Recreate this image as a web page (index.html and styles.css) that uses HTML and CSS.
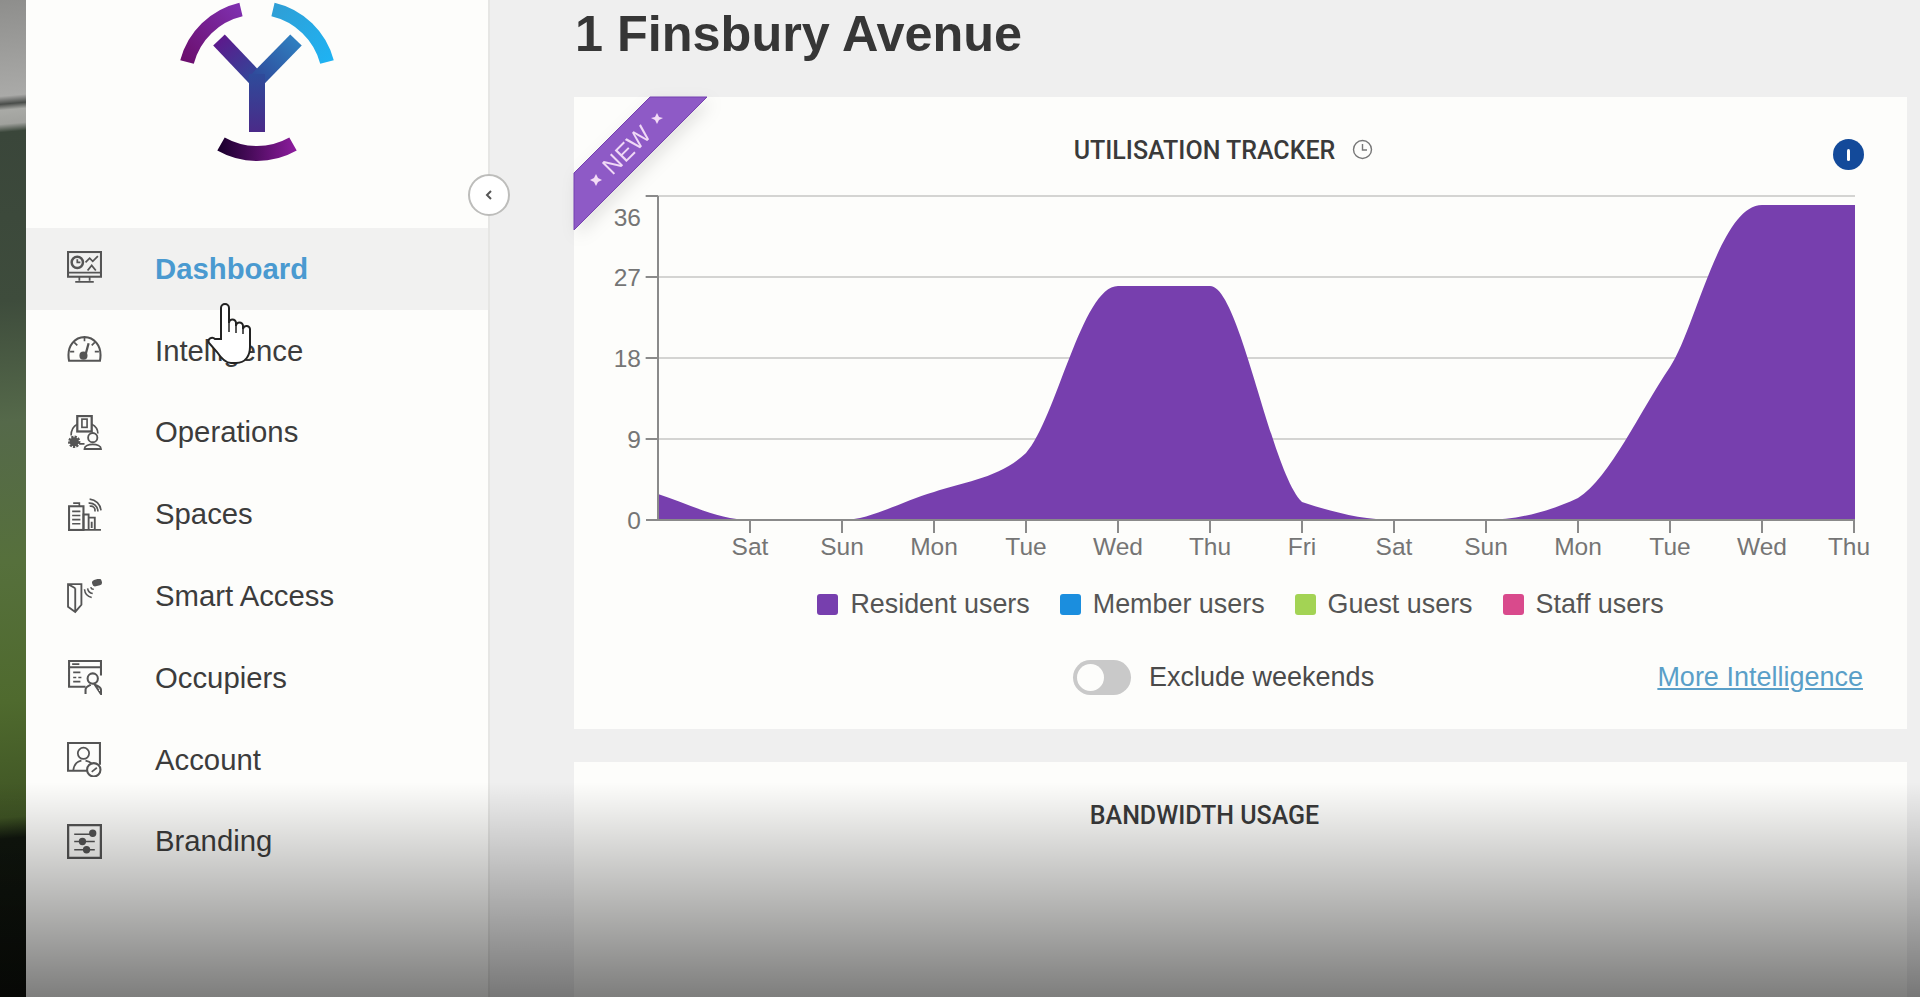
FILE: index.html
```html
<!DOCTYPE html>
<html lang="en">
<head>
    <meta charset="UTF-8">
    <meta name="viewport" content="width=device-width, initial-scale=1.0">
    <title>1 Finsbury Avenue - Dashboard</title>
    <link rel="stylesheet" href="styles.css">
</head>
<body>
    <div class="app">
        <div class="backdrop"></div>

        <aside class="sidebar">
            <div class="logo">
                <svg width="176" height="170" viewBox="170 0 176 170" fill="none">
                    <defs>
                        <linearGradient id="arcLeft" gradientUnits="userSpaceOnUse" x1="188" y1="62" x2="242" y2="10">
                            <stop offset="0" stop-color="#6b0f6e"/>
                            <stop offset="1" stop-color="#7f2fae"/>
                        </linearGradient>
                        <linearGradient id="arcRight" gradientUnits="userSpaceOnUse" x1="274" y1="10" x2="328" y2="62">
                            <stop offset="0" stop-color="#2f9fd6"/>
                            <stop offset="1" stop-color="#1fb2f2"/>
                        </linearGradient>
                        <linearGradient id="armLeft" gradientUnits="userSpaceOnUse" x1="220" y1="40" x2="258" y2="80">
                            <stop offset="0" stop-color="#5c1a8c"/>
                            <stop offset="1" stop-color="#2f4a9a"/>
                        </linearGradient>
                        <linearGradient id="armRight" gradientUnits="userSpaceOnUse" x1="297" y1="40" x2="258" y2="80">
                            <stop offset="0" stop-color="#2f7fc0"/>
                            <stop offset="1" stop-color="#2f4a9a"/>
                        </linearGradient>
                        <linearGradient id="stem" gradientUnits="userSpaceOnUse" x1="258" y1="76" x2="258" y2="132">
                            <stop offset="0" stop-color="#2f4a9a"/>
                            <stop offset="1" stop-color="#4a2a88"/>
                        </linearGradient>
                        <linearGradient id="arcBottom" gradientUnits="userSpaceOnUse" x1="222" y1="150" x2="296" y2="150">
                            <stop offset="0" stop-color="#1d0030"/>
                            <stop offset="1" stop-color="#8b1c9c"/>
                        </linearGradient>
                    </defs>
                    <path d="M188 62 A73 73 0 0 1 242 9.5" stroke="url(#arcLeft)" stroke-width="14"/>
                    <path d="M274 9.5 A73 73 0 0 1 328 62" stroke="url(#arcRight)" stroke-width="14"/>
                    <path d="M220 40 L258 80" stroke="url(#armLeft)" stroke-width="16"/>
                    <path d="M297 40 L258 80" stroke="url(#armRight)" stroke-width="16"/>
                    <path d="M258 74 V132" stroke="url(#stem)" stroke-width="16"/>
                    <path d="M222 144 A73 73 0 0 0 294 144" stroke="url(#arcBottom)" stroke-width="15"/>
                </svg>
            </div>
            <button class="collapse-btn" aria-label="Collapse menu">
                <svg width="12" height="14" viewBox="0 0 12 14" fill="none"><path d="M8 3 L4 7 L8 11" stroke="#555" stroke-width="2"/></svg>
            </button>
            <nav class="nav">
                <a class="nav-item active">
                    <svg class="nav-icon" viewBox="0 0 34 34">
                        <rect x="1" y="1" width="32" height="24" stroke-width="2"/>
                        <path d="M1 21 H33 M12 25 V29 M22 25 V29 M8 30 H26" stroke-width="1.700"/>
                        <circle cx="10" cy="11" r="5.500" stroke-width="2.400"/>
                        <path d="M10 8 V11 H13 M18 11 L22 7 L25 10 L30 5 M20 19 L24 14 L28 19" stroke-width="1.700"/>
                    </svg>
                    <span>Dashboard</span>
                </a>
                <a class="nav-item">
                    <svg class="nav-icon nav-icon-up" viewBox="0 0 34 34">
                        <path d="M2 28 C-1 12 9 5 17 5 C25 5 35 12 32 28 Z" stroke-width="2"/>
                        <path d="M17 5 V9 M7 10 L10 13 M27 10 L24 13 M3 19 H7 M31 19 H27" stroke-width="1.600"/>
                        <path d="M21 11 L18 22" stroke-width="2.200"/>
                        <circle cx="16" cy="23" r="3.200" fill="#555"/>
                    </svg>
                    <span>Intelligence</span>
                </a>
                <a class="nav-item">
                    <svg class="nav-icon" viewBox="0 0 34 34">
                        <rect x="10" y="1" width="14" height="15" stroke-width="2.200"/>
                        <rect x="14.500" y="4" width="5" height="8" stroke-width="1.600"/>
                        <path d="M10 9 C6 11 4 15 4 20 M24 9 C28 11 30 14 30 18 M12 28 H17" stroke-width="1.600"/>
                        <circle cx="7" cy="26" r="4.500" fill="#555" stroke-dasharray="2 1" stroke-width="3"/>
                        <circle cx="25" cy="22" r="4.500" stroke-width="1.800"/>
                        <path d="M17 33 C17 27 33 27 33 33 Z" stroke-width="1.800"/>
                    </svg>
                    <span>Operations</span>
                </a>
                <a class="nav-item">
                    <svg class="nav-icon" viewBox="0 0 34 34">
                        <rect x="2" y="9" width="14" height="23" stroke-width="2"/>
                        <path d="M6 6 H12 V9 M5 14 H13 M5 18 H13 M5 22 H13 M5 26 H13" stroke-width="1.600"/>
                        <path d="M16 32 V17 H21 V32 M21 20 H27 V32 M1 32 H33 M24 24 V30" stroke-width="1.800"/>
                        <path d="M21 6 A8 8 0 0 1 30 14 M22 2 A12 12 0 0 1 33 13 M22 9 A4 4 0 0 1 27 14" stroke-width="1.600"/>
                    </svg>
                    <span>Spaces</span>
                </a>
                <a class="nav-item">
                    <svg class="nav-icon" viewBox="0 0 34 34">
                        <path d="M1 5 H14 V25 L8 32 L1 27 Z M8 9 V32 M1 5 L8 9" stroke-width="1.800"/>
                        <path d="M17 10 A9 9 0 0 0 24 18 M20 9 A6 6 0 0 0 25 14 M23 8 A3 3 0 0 0 26 10" stroke-width="1.500"/>
                        <rect x="25" y="1" width="8" height="5" rx="2" fill="#555" transform="rotate(-15 29 3)"/>
                    </svg>
                    <span>Smart Access</span>
                </a>
                <a class="nav-item">
                    <svg class="nav-icon" viewBox="0 0 34 34">
                        <path d="M18 26 H2 V1 H33 V15 M2 7 H33" stroke-width="2"/>
                        <path d="M5 4 H12 M6 12 H13 M6 17 H9 M11 17 H14 M6 21 H13" stroke-width="1.600"/>
                        <circle cx="25" cy="18" r="5" stroke-width="2"/>
                        <path d="M18 33 V29 C18 26 21 25 23 24 M27 24 C30 25 33 26 33 29 V33 Z" stroke-width="2"/>
                    </svg>
                    <span>Occupiers</span>
                </a>
                <a class="nav-item">
                    <svg class="nav-icon" viewBox="0 0 34 34">
                        <path d="M24 28 H1 V1 H32 V22" stroke-width="2"/>
                        <circle cx="16" cy="11" r="5.500" stroke-width="1.700"/>
                        <path d="M6 28 C7 20 11 19 14 18 M18 18 C20 18.500 22 19 24 21" stroke-width="1.700"/>
                        <circle cx="26" cy="27" r="6.500" fill="#fdfdfb" stroke-width="2"/>
                        <path d="M24 29 L29 25" stroke-width="1.600"/>
                    </svg>
                    <span>Account</span>
                </a>
                <a class="nav-item">
                    <svg class="nav-icon" viewBox="0 0 34 34">
                        <rect x="1" y="1" width="32" height="32" stroke-width="2.400"/>
                        <path d="M7 10 H26 M7 17 H27 M7 25 H27" stroke-width="1.600"/>
                        <circle cx="25" cy="9" r="2.800" fill="#555"/>
                        <circle cx="15" cy="17" r="2.800" fill="#555"/>
                        <circle cx="19" cy="25" r="2.800" fill="#555"/>
                    </svg>
                    <span>Branding</span>
                </a>
            </nav>
        </aside>

        <main class="content">
            <h1 class="page-title">1 Finsbury Avenue</h1>

            <section class="card card-tracker">
                <svg class="ribbon" width="140" height="140" viewBox="0 0 140 140">
                    <polygon points="76,0 133,0 0,133 0,76" fill="#8e5ac6" stroke="#7540b0" stroke-width="1"/>
                    <text x="53" y="61" text-anchor="middle" transform="rotate(-45 53 53)" class="ribbon-text">NEW</text>
                    <path d="M83 16 L85 20 L89 21 L85 23 L83 27 L81 23 L77 21 L81 20 Z" fill="#f3dcf6"/>
                    <path d="M22 77 L24 81 L28 83 L24 85 L22 89 L20 85 L16 83 L20 81 Z" fill="#f3dcf6"/>
                </svg>

                <h2 class="card-title">
                    <span class="card-title-text">UTILISATION TRACKER
                        <svg class="clock" width="21" height="21" viewBox="0 0 21 21" fill="none" stroke="#777" stroke-width="1.4">
                            <circle cx="10.500" cy="10.500" r="9"/>
                            <path d="M10.500 5 V11 H15"/>
                        </svg>
                    </span>
                </h2>
                <span class="info-btn"></span>

                <svg class="chart" width="1333" height="385" viewBox="574 180 1333 385">
                    <g class="grid">
                        <path d="M645 196 H1855 M645 277 H1855 M645 358 H1855 M645 439 H1855"/>
                    </g>
                    <path class="area" d="M658 520 L658 494 C688 504 720 520 750 520 L842 520 C872 520 904 500 934 492 C964 482 1000 478 1026 453 C1056 420 1082 286 1118 286 L1210 286 C1240 286 1270 470 1302 502 C1332 512 1364 520 1394 520 L1486 520 C1516 520 1548 512 1578 498 C1610 478 1640 411 1670 367 C1695 330 1720 205 1762 205 L1855 205 L1855 520 Z"/>
                    <g class="axis">
                        <path d="M658 196 V520 M646 520 H1855 M646 196 H658 M646 277 H658 M646 358 H658 M646 439 H658"/>
                        <path d="M750 520 V533 M842 520 V533 M934 520 V533 M1026 520 V533 M1118 520 V533 M1210 520 V533 M1302 520 V533 M1394 520 V533 M1486 520 V533 M1578 520 V533 M1670 520 V533 M1762 520 V533 M1854 520 V533"/>
                    </g>
                    <g class="y-labels">
                        <text x="641" y="226">36</text>
                        <text x="641" y="286">27</text>
                        <text x="641" y="367">18</text>
                        <text x="641" y="448">9</text>
                        <text x="641" y="529">0</text>
                    </g>
                    <g class="x-labels">
                        <text x="750" y="555">Sat</text>
                        <text x="842" y="555">Sun</text>
                        <text x="934" y="555">Mon</text>
                        <text x="1026" y="555">Tue</text>
                        <text x="1118" y="555">Wed</text>
                        <text x="1210" y="555">Thu</text>
                        <text x="1302" y="555">Fri</text>
                        <text x="1394" y="555">Sat</text>
                        <text x="1486" y="555">Sun</text>
                        <text x="1578" y="555">Mon</text>
                        <text x="1670" y="555">Tue</text>
                        <text x="1762" y="555">Wed</text>
                        <text x="1849" y="555">Thu</text>
                    </g>
                </svg>

                <div class="legend">
                    <div class="legend-item"><span class="swatch swatch-resident"></span>Resident users</div>
                    <div class="legend-item"><span class="swatch swatch-member"></span>Member users</div>
                    <div class="legend-item"><span class="swatch swatch-guest"></span>Guest users</div>
                    <div class="legend-item"><span class="swatch swatch-staff"></span>Staff users</div>
                </div>

                <div class="card-footer">
                    <span class="toggle"><span class="toggle-knob"></span></span>
                    <span class="toggle-label">Exclude weekends</span>
                    <a class="more-link">More Intelligence</a>
                </div>
            </section>

            <section class="card card-bandwidth">
                <h2 class="card-title"><span class="card-title-text">BANDWIDTH USAGE</span></h2>
            </section>
        </main>

        <div class="video-shade"></div>

        <svg class="cursor" width="45" height="62" viewBox="0 0 45 62">
            <path d="M14 36 V5 a4 4 0 0 1 8 0 V20 a3.500 3.500 0 0 1 7 0 v3 a3.500 3.500 0 0 1 7 0 v3 a3.500 3.500 0 0 1 7 1 V44 c0 8 -4 16 -14 16 h-5 c-6 0 -10 -5 -14 -11 L2 40 c-2 -4 3 -7 6 -4 z" fill="#fff" stroke="#222" stroke-width="2"/>
            <path d="M22 20 V29 M29 23 V30 M36 26 V31" stroke="#222" stroke-width="1.500" fill="none"/>
        </svg>
    </div>
</body>
</html>
```

FILE: styles.css
```css
* {
    box-sizing: border-box;
}

html, body {
    margin: 0;
    padding: 0;
}

body {
    font-family: 'Liberation Sans', Arial, sans-serif;
    color: #3a3a3a;
    background-color: #efefef;
}

.app {
    position: relative;
    display: flex;
    width: 1920px;
    height: 997px;
    overflow: hidden;
}

.backdrop {
    flex: 0 0 26px;
    background: linear-gradient(175deg, #8e8e8c 0, #aaaaa8 96px, #4a4d4a 104px, #a9aaa6 110px, #a0a19d 124px, #3a463a 132px, #3e4c3c 300px, #55694a 420px, #56703c 560px, #4f6a2e 700px, #3f5424 815px, #10160e 836px, #0d100b 997px);
}

.sidebar {
    position: relative;
    flex: 0 0 464px;
    background-color: #fdfdfb;
    border-right: 2px solid #e6e6e4;
}

.logo {
    display: flex;
    justify-content: center;
    height: 228px;
}

.collapse-btn {
    position: absolute;
    top: 174px;
    right: -22px;
    z-index: 2;
    display: flex;
    align-items: center;
    justify-content: center;
    width: 42px;
    height: 42px;
    padding: 0;
    background-color: #fff;
    border: 2px solid #bdbdbb;
    border-radius: 50%;
}

.nav {
    display: flex;
    flex-direction: column;
}

.nav-item {
    display: flex;
    align-items: center;
    gap: 53px;
    height: 81.8px;
    padding-left: 41px;
    font-size: 29.3px;
    color: #3c3c3c;
}

.nav-item.active {
    font-weight: 700;
    color: #4a9ad0;
    background-color: #f1f1f0;
}

.nav-icon {
    flex: 0 0 35px;
    width: 35px;
    height: 35px;
    fill: none;
    stroke: #555;
    stroke-width: 1.5;
}

.nav-icon-up {
    margin-top: -3px;
}

.content {
    flex: 1;
    padding: 0 13px 0 84px;
}

.page-title {
    height: 97px;
    margin: 0;
    padding-top: 9px;
    padding-left: 1px;
    font-size: 50.4px;
    line-height: 50px;
    font-weight: 700;
    color: #363636;
}

.card {
    position: relative;
    background-color: #fdfdfb;
}

.card-tracker {
    height: 632px;
    margin-bottom: 33px;
    padding-top: 39px;
}

.card-bandwidth {
    height: 300px;
    padding-top: 39px;
}

.card-title {
    margin: 0;
    padding-right: 72px;
    text-align: center;
    font-family: Roboto, sans-serif;
    font-size: 25px;
    line-height: 30px;
    font-weight: 500;
    color: #3a3a3a;
}

.card-title-text {
    position: relative;
}

.clock {
    position: absolute;
    top: 3px;
    left: calc(100% + 17px);
}

.ribbon {
    position: absolute;
    top: 0;
    left: 0;
    z-index: 1;
    overflow: visible;
    filter: drop-shadow(4px 6px 8px rgba(0, 0, 0, 0.1));
}

.ribbon-text {
    font-size: 24px;
    letter-spacing: 0.5px;
    fill: #f0d9f6;
}

.info-btn {
    position: absolute;
    top: 42px;
    right: 43px;
    display: flex;
    align-items: center;
    justify-content: center;
    width: 31px;
    height: 31px;
    border-radius: 50%;
    background-color: #134a9a;
}

.info-btn::before {
    content: "";
    width: 3px;
    height: 12px;
    border-radius: 2px;
    background-color: #fff;
}

.chart {
    display: block;
    margin-top: 14px;
    font-size: 24.5px;
}

.grid path {
    fill: none;
    stroke: #d4d4d2;
    stroke-width: 2;
}

.area {
    fill: #773fae;
}

.axis path {
    fill: none;
    stroke: #8a8a8a;
    stroke-width: 2;
}

.y-labels text {
    fill: #757575;
    text-anchor: end;
}

.x-labels text {
    fill: #757575;
    text-anchor: middle;
}

.legend {
    display: flex;
    justify-content: center;
    gap: 30px;
    height: 32px;
    margin-top: 23px;
    font-size: 26.9px;
    line-height: 32px;
    color: #555;
}

.legend-item {
    display: flex;
    align-items: center;
    gap: 12px;
}

.swatch {
    width: 21px;
    height: 21px;
    border-radius: 3px;
}

.swatch-resident {
    background-color: #773fae;
}

.swatch-member {
    background-color: #1b8ede;
}

.swatch-guest {
    background-color: #a3d354;
}

.swatch-staff {
    background-color: #d94a8c;
}

.card-footer {
    display: flex;
    align-items: center;
    height: 35px;
    margin-top: 40px;
    padding: 0 44px 0 499px;
    font-size: 27px;
}

.toggle {
    display: flex;
    align-items: center;
    width: 58px;
    height: 35px;
    padding-left: 4px;
    border-radius: 18px;
    background-color: #c9c9c9;
}

.toggle-knob {
    width: 27px;
    height: 27px;
    border-radius: 50%;
    background-color: #fdfdfb;
}

.toggle-label {
    margin-left: 18px;
    color: #4a4a4a;
}

.more-link {
    margin-left: auto;
    color: #5a9fc8;
    text-decoration: underline;
}

/* dark fade along the bottom of the video frame */
.video-shade {
    position: absolute;
    left: 0;
    right: 0;
    bottom: 0;
    z-index: 3;
    height: 215px;
    background: linear-gradient(180deg, rgba(0, 0, 0, 0) 0, rgba(0, 0, 0, 0.5) 100%);
    pointer-events: none;
}

.cursor {
    position: absolute;
    top: 303px;
    left: 207px;
    z-index: 4;
}
```
